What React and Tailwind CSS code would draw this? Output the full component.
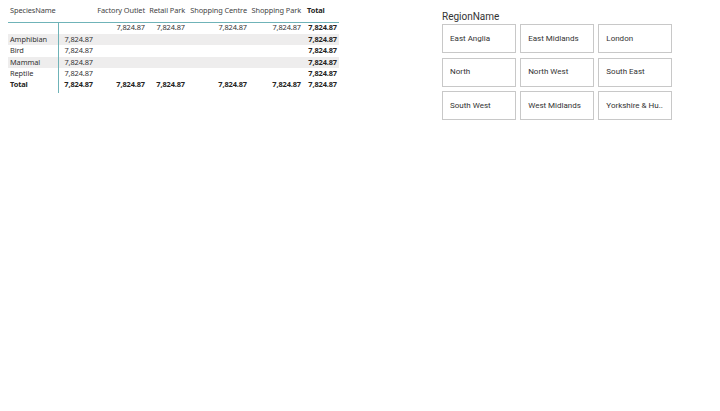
import React from "react";

const cols = [
  { w: "w-[50px]" },
  { w: "w-[38px]" },
  { w: "w-[51px]" },
  { w: "w-[40px]" },
  { w: "w-[62px]" },
  { w: "w-[54px]" },
  { w: "w-[36px]" },
];

const V = "7,824.87";

function Cell({ i, children, bold, left, className = "" }) {
  return (
    <div
      className={`${cols[i].w} shrink-0 flex items-center whitespace-nowrap ${left ? "justify-start pl-[2px]" : "justify-end pr-[2px]"} ${bold ? "font-bold text-[#252423]" : ""} ${className}`}
    >
      {children}
    </div>
  );
}

function Row({ cells, gray, labelBold }) {
  return (
    <div className={`flex h-[11.4px] ${gray ? "bg-[#eeeded]" : ""}`}>
      {cells.map((c, i) => (
        <Cell
          key={i}
          i={i}
          left={i === 0}
          bold={i === 6 || (i === 0 && labelBold)}
          className={i === 1 ? "border-l border-[#6fb3b8] pr-[3px]" : ""}
        >
          {c}
        </Cell>
      ))}
    </div>
  );
}

const regions = [
  "East Anglia",
  "East Midlands",
  "London",
  "North",
  "North West",
  "South East",
  "South West",
  "West Midlands",
  "Yorkshire & Hu..",
];

export default function App() {
  return (
    <div className="w-[720px] h-[411px] bg-white flex items-start">
      <div
        className="ml-[8px] w-[331px] text-[7.4px] text-[#333] leading-none tracking-[-0.1px]"
        style={{ fontFamily: '"Noto Sans", "Open Sans", sans-serif' }}
      >
        <div className="flex h-[21.5px] items-center text-[#444]">
          <Cell i={0} left>SpeciesName</Cell>
          <Cell i={1}></Cell>
          <Cell i={2}>Factory Outlet</Cell>
          <Cell i={3}>Retail Park</Cell>
          <Cell i={4}>Shopping Centre</Cell>
          <Cell i={5}>Shopping Park</Cell>
          <Cell i={6} left bold className="pl-[4px]">Total</Cell>
        </div>
        <div className="border-t border-[#6fb3b8]">
          <Row cells={["", "", V, V, V, V, V]} />
          <Row cells={["Amphibian", V, "", "", "", "", V]} gray />
          <Row cells={["Bird", V, "", "", "", "", V]} />
          <Row cells={["Mammal", V, "", "", "", "", V]} gray />
          <Row cells={["Reptile", V, "", "", "", "", V]} />
          <div className="flex h-[11.4px] font-bold text-[#252423]">
            {["Total", V, V, V, V, V, V].map((c, i) => (
              <Cell key={i} i={i} left={i === 0} className={i === 1 ? "border-l border-[#6fb3b8] pr-[3px]" : ""}>
                {c}
              </Cell>
            ))}
          </div>
          <div className="flex h-[2px]">
            <div className="w-[50px]" />
            <div className="border-l border-[#6fb3b8]" />
          </div>
        </div>
      </div>
      <div
        className="ml-[103px] mt-[12px] w-[230px]"
        style={{ fontFamily: "Roboto, sans-serif" }}
      >
        <div className="text-[10px] text-[#333] leading-none h-[12px]">RegionName</div>
        <div className="grid grid-cols-3 gap-x-[4.5px] gap-y-[4.5px] w-[230px]">
          {regions.map((r) => (
            <div
              key={r}
              className="h-[29px] border border-[#c8c8c8] flex items-center pl-[7px] text-[8px] text-[#333] whitespace-nowrap"
            >
              {r}
            </div>
          ))}
        </div>
      </div>
    </div>
  );
}
